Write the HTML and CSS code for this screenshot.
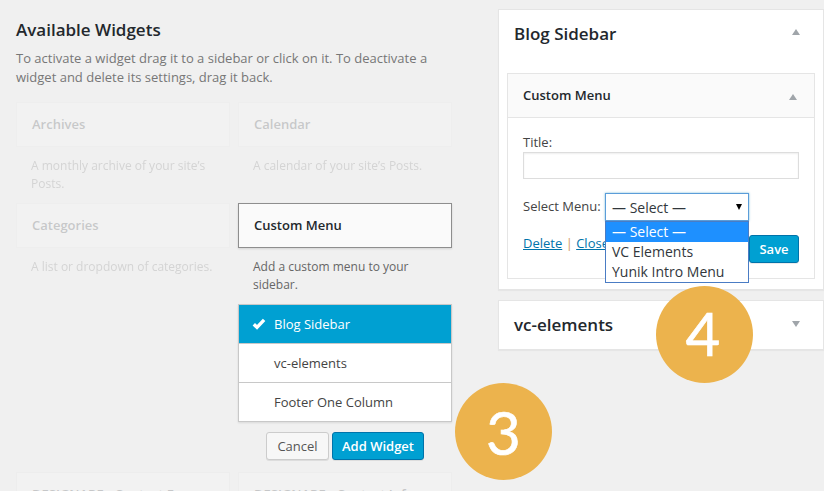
FILE: index.html
```html
<!DOCTYPE html>
<html lang="en">
<head>
<meta charset="utf-8">
<title>Widgets</title>
<link rel="stylesheet" href="styles.css">
</head>
<body>
<main class="page">
  <section class="available">
    <h2>Available Widgets</h2>
    <p class="intro">To activate a widget drag it to a sidebar or click on it. To deactivate a widget and delete its settings, drag it back.</p>
    <div class="widgets">
      <article class="widget faded"><h3>Archives</h3><p>A monthly archive of your site’s Posts.</p></article>
      <article class="widget faded"><h3>Calendar</h3><p>A calendar of your site’s Posts.</p></article>
      <article class="widget faded"><h3>Categories</h3><p>A list or dropdown of categories.</p></article>
      <article class="widget chosen">
        <h3>Custom Menu</h3>
        <p>Add a custom menu to your sidebar.</p>
        <ul class="chooser">
          <li class="selected"><svg class="check" viewBox="0 0 14 12"><path d="M1.8 6.2 5 9.3 12.1 1.8" /></svg>Blog Sidebar</li>
          <li>vc-elements</li>
          <li>Footer One Column</li>
        </ul>
        <div class="actions"><button class="btn cancel">Cancel</button><button class="btn primary add">Add Widget</button></div>
      </article>
      <article class="widget faded"><h3>DESIGNARE - Contact Form</h3></article>
      <article class="widget faded"><h3>DESIGNARE - Contact Info</h3></article>
    </div>
  </section>
  <section class="sidebars">
    <div class="panel open">
      <div class="panel-head"><h2>Blog Sidebar</h2><svg class="arrow" viewBox="0 0 8 6"><path d="M4 0 8 6H0z"/></svg></div>
      <div class="box">
        <div class="box-head"><h3>Custom Menu</h3><svg class="arrow" viewBox="0 0 8 6"><path d="M4 0 8 6H0z"/></svg></div>
        <div class="box-body">
          <div class="label">Title:</div>
          <div class="input"></div>
          <div class="menu-row">
            <span>Select Menu:</span>
            <div class="select">— Select —<svg viewBox="0 0 6 6"><path d="M0 0H6L3 6z"/></svg>
              <ul class="options"><li class="active">— Select —</li><li>VC Elements</li><li>Yunik Intro Menu</li></ul>
            </div>
          </div>
          <div class="foot"><div class="links"><a>Delete</a> | <a>Close</a></div><button class="btn primary save">Save</button></div>
        </div>
      </div>
    </div>
    <div class="panel closed"><h2>vc-elements</h2><svg class="arrow" viewBox="0 0 8 6"><path d="M0 0H8L4 6z"/></svg></div>
  </section>
</main>
<div class="step three">3</div>
<div class="step four">4</div>
</body>
</html>
```
FILE: styles.css
```css
* { box-sizing: border-box; }
body { margin: 0; background: #f0f0f0; color: #444; font: 13px/19px "Open Sans", sans-serif; }
h2, h3, p, ul { margin: 0; padding: 0; }
ul { list-style: none; }
h2, h3 { color: #23282d; font-weight: 550; }
.page { display: flex; gap: 46px; width: 824px; height: 491px; overflow: hidden; position: relative; }
.available { width: 436px; margin-left: 16px; flex: none; padding-top: 18px; }
.available h2 { font-size: 17px; line-height: 24px; }
.intro { margin-top: 7px; color: #777; font-size: 13px; line-height: 19px; }
.widgets { display: grid; grid-template-columns: 214px 214px; column-gap: 8px; grid-template-rows: 101px 269px 45px; margin-top: 15px; }
.widget h3 { height: 45px; border: 1px solid #e5e5e5; background: #fafafa; padding: 0 15px; font-size: 13px; line-height: 43px; white-space: nowrap; overflow: hidden; }
.widget p { padding: 10px 15px 0; font-size: 12px; line-height: 18px; color: #666; }
.faded { opacity: .2; }
.chosen h3 { border-color: #8e8e8e; box-shadow: 0 1px 2px rgba(0,0,0,.12); }
.chooser { margin-top: 10px; border: 1px solid #c8c8c8; background: #fff; box-shadow: 0 1px 2px rgba(0,0,0,.1); }
.chooser li { height: 39px; padding-left: 35px; line-height: 38px; border-bottom: 1px solid #c8c8c8; }
.chooser li:last-child { height: 38px; border: 0; }
.chooser .selected { display: flex; padding-left: 13px; color: #fff; background: #00a0d2; }
.check { width: 14px; height: 12px; margin: 13px 8px 0 0; fill: none; stroke: #fff; stroke-width: 3.4; }
.actions { display: flex; gap: 3px; margin: 10px 0 0 28px; }
.btn { height: 28px; padding: 0; border: 1px solid #ccc; border-radius: 3px; background: #f7f7f7; color: #555; font: 13px/26px "Open Sans", sans-serif; box-shadow: 0 1px 0 rgba(0,0,0,.08); }
.primary { background: #00a0d2; border-color: #0073aa; color: #fff; font-weight: 550; }
.cancel { width: 63px; }
.add { width: 92px; }
.save { width: 50px; }
.sidebars { width: 326px; flex: none; padding-top: 9px; }
.panel { border: 1px solid #e5e5e5; background: #fff; box-shadow: 0 1px 1px rgba(0,0,0,.04); }
.panel h2 { font-size: 17px; line-height: 24px; }
.open { height: 281px; padding: 0 8px; }
.panel-head { display: flex; justify-content: space-between; height: 63px; padding: 12px 15px 0 7px; }
.arrow { width: 8px; height: 6px; fill: #a0a5aa; flex: none; }
.panel-head .arrow { margin-top: 7px; }
.box { height: 206px; border: 1px solid #e5e5e5; }
.box-head { display: flex; align-items: center; justify-content: space-between; height: 44px; padding: 0 17px 0 15px; background: #fafafa; border-bottom: 1px solid #e5e5e5; }
.box-head h3 { font-size: 13px; }
.box-head .arrow { margin-top: 2px; }
.box-body { padding: 15px; }
.input { height: 27px; border: 1px solid #ddd; box-shadow: inset 0 1px 2px rgba(0,0,0,.07); }
.menu-row { display: flex; margin-top: 14px; line-height: 27px; }
.menu-row > span { width: 82px; white-space: nowrap; }
.select { position: relative; width: 144px; height: 28px; padding-left: 6px; border: 1px solid #5b9dd9; background: #fff; box-shadow: 0 0 2px rgba(30,140,190,.6); font-size: 14px; line-height: 28px; color: #32373c; }
.select svg { position: absolute; right: 6px; top: 10px; width: 6px; height: 6px; fill: #000; }
.options { position: absolute; left: -1px; top: 27px; z-index: 2; width: 144px; height: 62px; border: 1px solid #4a7cc4; background: #fff; line-height: 20px; }
.options li { height: 20px; padding-left: 6px; }
.options .active { color: #fff; background: #1e90ff; }
.foot { display: flex; justify-content: space-between; margin-top: 14px; }
.links { line-height: 16px; color: #d39b5c; white-space: pre; }
.links a { color: #0073aa; text-decoration: underline; }
.closed { display: flex; justify-content: space-between; height: 50px; margin-top: 10px; padding: 12px 23px 0 15px; }
.closed .arrow { margin-top: 8px; }
.step { position: absolute; width: 97px; height: 97px; border-radius: 50%; background: #ecb34d; color: #fff; text-align: center; font: 60px/97px Lato, sans-serif; -webkit-text-stroke: .6px #fff; z-index: 3; }
.three { left: 454.5px; top: 383px; padding-left: 1px; line-height: 98px; }
.four { left: 655.5px; top: 286px; padding-right: 2px; line-height: 94px; }
```
